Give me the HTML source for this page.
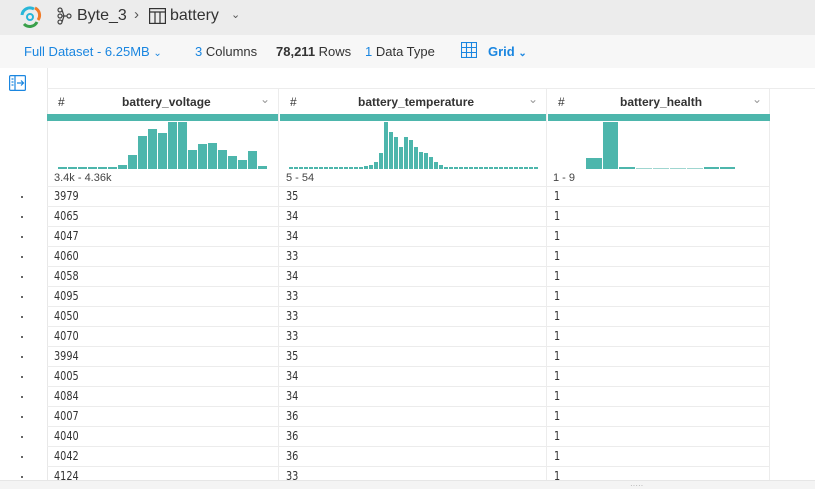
<!DOCTYPE html>
<html><head><meta charset="utf-8"><style>
*{margin:0;padding:0;box-sizing:border-box}
body{width:815px;height:489px;overflow:hidden;background:#fff;font-family:"Liberation Sans",sans-serif;color:#333;position:relative}
.top{position:absolute;left:0;top:0;width:815px;height:35px;background:#ececec}
.tb{position:absolute;left:0;top:35px;width:815px;height:33px;background:#f7f7f7;font-size:13px}
.abs{position:absolute;white-space:nowrap}
.blue{color:#1a86e0}
.vl{position:absolute;top:68px;left:47px;width:1px;height:421px;background:#e8e8e8}
.hl{position:absolute;left:47px;height:1px;background:#ececec}
.col{position:absolute;top:89px;height:391px;border-right:1px solid #ececec}
.hdr{position:absolute;top:89px;height:24px;font-size:12px;font-weight:bold;color:#333}
.teal{position:absolute;top:114px;height:7px;background:#4db6ac}
.hist{position:absolute;top:121px;height:48px;display:flex;align-items:flex-end}
.hist i{display:block;background:#4db6ac;margin-right:1px}
.rng{position:absolute;top:172px;font-size:11px;color:#444}
.cell{position:absolute;font-family:"DejaVu Sans Condensed","DejaVu Sans",sans-serif;font-size:12px;color:#333;transform:scaleX(0.9);transform-origin:left}
.dot{position:absolute;left:21px;width:2px;height:2px;background:#666}
.bot{position:absolute;left:0;top:480px;width:815px;height:9px;background:#f4f4f4;border-top:1px solid #e6e6e6}
</style></head><body>
<div class="top">
<svg class="abs" style="left:18px;top:5px" width="24" height="24" viewBox="0 0 24 24"><path d="M4 10a8 8 0 0 1 12-6" stroke="#29b6d8" stroke-width="3" fill="none"/><path d="M17 3a8 8 0 0 1 3 12" stroke="#f07b2a" stroke-width="3" fill="none"/><path d="M19 17a8 8 0 0 1-13 2" stroke="#3aa04a" stroke-width="3" fill="none"/><circle cx="12" cy="12" r="3" fill="none" stroke="#29b6d8" stroke-width="2"/></svg>
<svg class="abs" style="left:56px;top:7px" width="16" height="18" viewBox="0 0 16 18"><g fill="none" stroke="#444" stroke-width="1.2"><circle cx="4" cy="3" r="2"/><circle cx="4" cy="9" r="2"/><circle cx="4" cy="15" r="2"/><circle cx="13" cy="9" r="2"/><path d="M6 9h5M6 3l2 6M6 15l2-6"/></g></svg>
<div class="abs" style="left:77px;top:7px;font-size:16px;color:#333">Byte_3</div>
<div class="abs" style="left:134px;top:6px;font-size:15px;color:#555">›</div>
<svg class="abs" style="left:149px;top:8px" width="17" height="16" viewBox="0 0 17 16"><rect x="0.6" y="0.6" width="15.8" height="14.8" fill="none" stroke="#333" stroke-width="1.2"/><path d="M0.6 4h15.8M6 4v11.4M11 4v11.4" stroke="#333" stroke-width="1.2"/></svg>
<div class="abs" style="left:170px;top:7px;font-size:16px;color:#333">battery</div>
<div class="abs" style="left:231px;top:8px;font-size:11px;color:#555">⌄</div>
</div>
<div class="tb">
<div class="abs blue" style="left:24px;top:9px">Full Dataset - 6.25MB <span style="font-size:10px">⌄</span></div>
<div class="abs" style="left:195px;top:9px"><span class="blue">3</span> Columns</div>
<div class="abs" style="left:276px;top:9px"><b>78,211</b> Rows</div>
<div class="abs" style="left:365px;top:9px"><span class="blue">1</span> Data Type</div>
<svg class="abs" style="left:461px;top:7px" width="16" height="16" viewBox="0 0 16 16"><g fill="none" stroke="#1a86e0" stroke-width="1.1"><rect x="0.5" y="0.5" width="15" height="15"/><path d="M5.5 .5v15M10.5 .5v15M.5 5.5h15M.5 10.5h15"/></g></svg>
<div class="abs blue" style="left:488px;top:9px;font-weight:bold">Grid <span style="font-size:10px">⌄</span></div>
</div>
<svg class="abs" style="left:9px;top:75px" width="17" height="16" viewBox="0 0 17 16"><g fill="none" stroke="#1a86e0" stroke-width="1.2"><rect x="0.6" y="0.6" width="15.8" height="14.8" rx="1"/><path d="M6 0.6v14.8M2.5 4h2M2.5 7h2M2.5 10h2M8 8h6M12 5.5l2.5 2.5-2.5 2.5"/></g></svg>
<div class="vl"></div>
<div class="hl" style="top:88px;width:768px"></div>
<div class="col" style="left:47px;width:232px"></div>
<div class="col" style="left:279px;width:268px"></div>
<div class="col" style="left:547px;width:223px"></div>
<div class="hdr" style="left:58px;width:221px"><span class="abs" style="left:0;top:6px;font-weight:normal">#</span><span class="abs" style="left:64px;top:6px">battery_voltage</span><span class="abs" style="left:202px;top:3px;font-weight:normal;color:#999">⌄</span></div>
<div class="hdr" style="left:290px;width:257px"><span class="abs" style="left:0;top:6px;font-weight:normal">#</span><span class="abs" style="left:68px;top:6px">battery_temperature</span><span class="abs" style="left:238px;top:3px;font-weight:normal;color:#999">⌄</span></div>
<div class="hdr" style="left:558px;width:212px"><span class="abs" style="left:0;top:6px;font-weight:normal">#</span><span class="abs" style="left:62px;top:6px">battery_health</span><span class="abs" style="left:194px;top:3px;font-weight:normal;color:#999">⌄</span></div>
<div class="teal" style="left:47px;width:231px"></div>
<div class="teal" style="left:280px;width:266px"></div>
<div class="teal" style="left:548px;width:222px"></div>
<div class="hist" style="left:58px">
<i style="width:9px;height:2px"></i><i style="width:9px;height:2px"></i><i style="width:9px;height:2px"></i><i style="width:9px;height:2px"></i><i style="width:9px;height:2px"></i><i style="width:9px;height:2px"></i><i style="width:9px;height:4px"></i><i style="width:9px;height:14px"></i><i style="width:9px;height:33px"></i><i style="width:9px;height:40px"></i><i style="width:9px;height:36px"></i><i style="width:9px;height:47px"></i><i style="width:9px;height:47px"></i><i style="width:9px;height:19px"></i><i style="width:9px;height:25px"></i><i style="width:9px;height:26px"></i><i style="width:9px;height:19px"></i><i style="width:9px;height:13px"></i><i style="width:9px;height:9px"></i><i style="width:9px;height:18px"></i><i style="width:9px;height:3px"></i>
</div>
<div class="hist" style="left:289px" id="t"></div>
<div class="hist" style="left:586px">
<i style="width:16px;height:11px"></i><i style="width:15px;height:47px"></i><i style="width:16px;height:2px"></i><i style="width:16px;height:1px;background:#9fd6d0"></i><i style="width:16px;height:1px;background:#9fd6d0"></i><i style="width:16px;height:1px;background:#9fd6d0"></i><i style="width:16px;height:1px;background:#9fd6d0"></i><i style="width:15px;height:2px"></i><i style="width:15px;height:2px"></i>
</div>
<div class="rng" style="left:54px">3.4k - 4.36k</div>
<div class="rng" style="left:286px">5 - 54</div>
<div class="rng" style="left:553px">1 - 9</div>
<div id="rows"></div>
<div class="bot"><div class="abs" style="left:630px;top:0;font-size:8px;color:#aaa">·····</div></div>
<script>
var t=[];for(var k=0;k<15;k++)t.push(2);
t=t.concat([3,4,7,16,47,37,32,22,32,29,22,17,16,12,7,4]);
while(t.length<50)t.push(2);
var h='';t.forEach(function(v){h+='<i style="width:4px;height:'+v+'px"></i>'});
document.getElementById('t').innerHTML=h;
var d=[[3979,35],[4065,34],[4047,34],[4060,33],[4058,34],[4095,33],[4050,33],[4070,33],[3994,35],[4005,34],[4084,34],[4007,36],[4040,36],[4042,36],[4124,33]];
var r='<div class="hl" style="top:186px;width:723px"></div>';
d.forEach(function(x,i){var y=186+i*20;
r+='<div class="dot" style="top:'+(y+10)+'px"></div><div class="cell" style="left:54px;top:'+(y+3)+'px">'+x[0]+'</div><div class="cell" style="left:286px;top:'+(y+3)+'px">'+x[1]+'</div><div class="cell" style="left:554px;top:'+(y+3)+'px">1</div><div class="hl" style="top:'+(y+20)+'px;width:723px"></div>';});
document.getElementById('rows').innerHTML=r;
</script>
</body></html>
